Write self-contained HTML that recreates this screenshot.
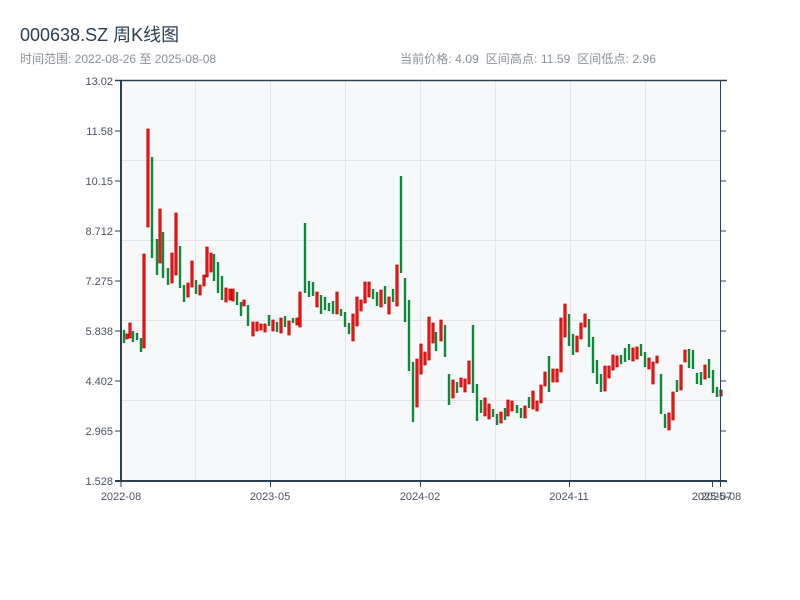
<!DOCTYPE html>
<html><head><meta charset="utf-8"><style>
html,body{margin:0;padding:0;background:#fff;width:800px;height:600px;overflow:hidden}
svg{display:block}
text{font-family:"Liberation Sans","Noto Sans CJK SC",sans-serif;white-space:pre}
</style></head><body>
<svg width="800" height="600" xmlns="http://www.w3.org/2000/svg">
<text x="20" y="41" font-size="18" fill="#2c3e50">000638.SZ 周K线图</text>
<text x="20" y="63" font-size="12" fill="#8a9099">时间范围: 2022-08-26 至 2025-08-08</text>
<text x="400" y="63" font-size="12" fill="#8a9099" textLength="256">当前价格: 4.09  区间高点: 11.59  区间低点: 2.96</text>
<rect x="121" y="80" width="600" height="401" fill="#f7f8fa"/>
<g stroke="#e3e5ea" stroke-width="1">
<line x1="121" y1="160.5" x2="721" y2="160.5"/><line x1="121" y1="240.5" x2="721" y2="240.5"/>
<line x1="121" y1="320.5" x2="721" y2="320.5"/><line x1="121" y1="400.5" x2="721" y2="400.5"/>
<line x1="195.5" y1="80" x2="195.5" y2="481"/><line x1="270.5" y1="80" x2="270.5" y2="481"/>
<line x1="345.5" y1="80" x2="345.5" y2="481"/><line x1="420.5" y1="80" x2="420.5" y2="481"/>
<line x1="495.5" y1="80" x2="495.5" y2="481"/><line x1="570.5" y1="80" x2="570.5" y2="481"/>
<line x1="645.5" y1="80" x2="645.5" y2="481"/>
</g>
<g id="c"></g>
<g stroke="#2c3e50">
<line x1="115" y1="80.5" x2="727" y2="80.5" stroke-width="1.5"/>
<line x1="115" y1="481" x2="727" y2="481" stroke-width="2"/>
<line x1="121" y1="80" x2="121" y2="482" stroke-width="2"/>
<line x1="720.5" y1="80" x2="720.5" y2="482" stroke-width="1"/>
<g stroke-width="1">
<line x1="115" y1="131" x2="121" y2="131"/><line x1="115" y1="181" x2="121" y2="181"/>
<line x1="115" y1="231" x2="121" y2="231"/><line x1="115" y1="281" x2="121" y2="281"/>
<line x1="115" y1="331" x2="121" y2="331"/><line x1="115" y1="381" x2="121" y2="381"/>
<line x1="115" y1="431" x2="121" y2="431"/>
<line x1="720" y1="131" x2="726" y2="131"/><line x1="720" y1="181" x2="726" y2="181"/>
<line x1="720" y1="231" x2="726" y2="231"/><line x1="720" y1="281" x2="726" y2="281"/>
<line x1="720" y1="331" x2="726" y2="331"/><line x1="720" y1="381" x2="726" y2="381"/>
<line x1="720" y1="431" x2="726" y2="431"/>
<line x1="121" y1="481" x2="121" y2="487"/><line x1="270.5" y1="481" x2="270.5" y2="487"/>
<line x1="420.5" y1="481" x2="420.5" y2="487"/><line x1="569.5" y1="481" x2="569.5" y2="487"/>
<line x1="712.5" y1="481" x2="712.5" y2="487"/><line x1="720.5" y1="481" x2="720.5" y2="487"/>
</g></g>
<g font-size="11" fill="#4a5260" text-anchor="end">
<text x="113" y="85">13.02</text><text x="113" y="135">11.58</text><text x="113" y="185">10.15</text>
<text x="113" y="235">8.712</text><text x="113" y="285">7.275</text><text x="113" y="335">5.838</text>
<text x="113" y="385">4.402</text><text x="113" y="435">2.965</text><text x="113" y="485">1.528</text>
</g>
<g font-size="11" fill="#4a5260" text-anchor="middle">
<text x="121" y="500">2022-08</text><text x="270" y="500">2023-05</text><text x="420" y="500">2024-02</text>
<text x="569" y="500">2024-11</text><text x="712" y="500">2025-07</text><text x="721" y="500">2025-08</text>
</g>
</svg>
<script>
var d=[[124,330,343,0],[127,334,339,1],[130,323,338,1],[133,331,342,0],[137,333,340,0],[141,338,352,0],[144,254,348,1],[148,129,227,1],[152,157,258,0],[157,239,275,0],[160,209,263,1],[163,232,278,0],[168,268,285,0],[172,253,283,1],[176,213,275,1],[180,246,288,0],[184,285,302,0],[188,283,297,1],[192,261,287,1],[196,280,294,0],[200,285,295,1],[204,275,286,1],[207,247,277,1],[211,253,272,1],[214,254,281,0],[218,262,293,0],[222,276,300,0],[226,288,302,1],[230,289,300,1],[233,289,301,1],[237,292,305,0],[241,302,316,0],[244,300,306,1],[248,305,326,0],[253,322,336,1],[257,322,331,1],[261,324,330,1],[265,324,332,1],[269,315,326,0],[273,320,331,1],[277,322,332,0],[281,318,333,1],[285,316,327,0],[289,321,335,1],[293,318,323,0],[297,318,325,1],[300,292,327,1],[305,223,293,0],[309,281,297,0],[313,282,296,0],[317,292,307,1],[321,295,314,0],[325,297,310,0],[329,303,311,0],[333,301,314,0],[337,292,314,1],[341,309,316,0],[345,312,327,0],[349,323,334,0],[353,314,341,1],[357,297,326,1],[361,300,311,1],[365,282,303,1],[369,282,297,1],[373,289,299,0],[377,292,306,0],[381,290,307,1],[385,286,304,0],[389,297,314,1],[393,289,302,0],[397,265,306,1],[401,176,273,0],[405,278,322,0],[409,300,371,0],[413,362,422,0],[417,359,407,1],[421,344,374,1],[425,352,365,1],[429,317,360,1],[433,323,343,1],[436,332,351,0],[441,320,341,1],[445,325,357,0],[449,374,405,0],[453,380,398,1],[457,382,393,0],[461,378,387,1],[465,379,392,1],[469,361,384,1],[473,325,393,0],[477,384,421,0],[481,400,413,0],[485,398,416,1],[489,404,419,1],[493,409,417,0],[497,414,425,0],[501,412,423,1],[505,408,420,0],[508,400,416,1],[512,401,411,1],[517,405,413,0],[521,408,418,0],[525,406,418,1],[529,397,408,0],[533,391,409,1],[537,401,411,1],[541,385,403,1],[545,372,386,1],[549,356,392,0],[553,369,382,1],[557,369,382,1],[561,318,372,1],[565,304,337,1],[569,314,346,0],[573,334,355,0],[577,336,352,1],[581,323,339,1],[585,314,327,1],[589,319,347,0],[593,337,373,0],[597,360,384,0],[601,374,392,0],[605,366,391,1],[609,366,378,1],[613,355,370,1],[617,356,367,1],[621,355,364,0],[625,348,362,0],[629,344,360,0],[633,348,361,1],[637,347,359,1],[641,344,356,0],[645,352,367,0],[649,358,369,1],[653,362,384,1],[657,356,363,1],[661,374,414,0],[665,414,428,0],[669,413,430,1],[673,392,420,1],[677,380,392,0],[681,365,390,1],[685,350,362,1],[689,349,368,0],[693,350,369,0],[697,373,384,0],[701,372,385,0],[705,365,379,1],[709,359,378,0],[713,370,393,0],[717,387,397,0],[721,390,396,1]];
var s='';d.forEach(function(c){var h=Math.max(2,c[2]-c[1]);
if(c[3])s+='<rect x="'+(c[0]-1.2)+'" y="'+c[1]+'" width="2.4" height="'+h+'" fill="#e81818" stroke="#c80000" stroke-width="0.7"/>';
else s+='<rect x="'+(c[0]-1.2)+'" y="'+c[1]+'" width="2.4" height="'+h+'" fill="#0b8a3b"/>';});
document.getElementById('c').innerHTML=s;
</script>
</body></html>
